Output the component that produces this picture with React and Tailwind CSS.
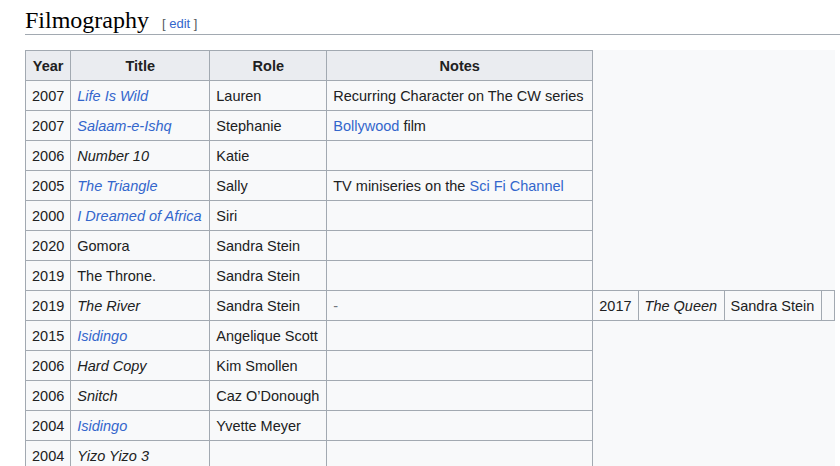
import React from "react";

const rows = [
  ["2007", "Life Is Wild", "link", "Lauren", [["Recurring Character on The CW series"]]],
  ["2007", "Salaam-e-Ishq", "link", "Stephanie", [["Bollywood", true], [" film"]]],
  ["2006", "Number 10", "it", "Katie", []],
  ["2005", "The Triangle", "link", "Sally", [["TV miniseries on the "], ["Sci Fi Channel", true]]],
  ["2000", "I Dreamed of Africa", "link", "Siri", []],
  ["2020", "Gomora", "plain", "Sandra Stein", []],
  ["2019", "The Throne.", "plain", "Sandra Stein", []],
  ["2019", "The River", "it", "Sandra Stein", "dash"],
  ["2015", "Isidingo", "link", "Angelique Scott", []],
  ["2006", "Hard Copy", "it", "Kim Smollen", []],
  ["2006", "Snitch", "it", "Caz O\u2019Donough", []],
  ["2004", "Isidingo", "link", "Yvette Meyer", []],
  ["2004", "Yizo Yizo 3", "it", "", []],
];

const td = "border border-[#a2a9b1] px-[6px] h-[30px] py-0 whitespace-nowrap";

export default function App() {
  return (
    <div className="w-[840px] h-[466px] overflow-hidden bg-white text-[#202122] font-['Liberation_Sans',Arial,sans-serif]">
      <div className="pl-[25px] pt-[5px]">
        <div className="flex items-baseline border-b border-[#a2a9b1] h-[30px]">
          <h2 className="font-['Liberation_Serif','Times_New_Roman',serif] text-[24px] leading-[30px] text-[#000]">
            Filmography
          </h2>
          <span className="ml-[13px] text-[13px] text-[#54595d]">
            [ <span className="text-[#3366cc]">edit</span> ]
          </span>
        </div>
        <table className="mt-[15px] border-collapse table-fixed bg-[#f8f9fa] text-[14.5px] leading-[20px]">
          <colgroup>
            <col className="w-[45px]" />
            <col className="w-[139px]" />
            <col className="w-[117px]" />
            <col className="w-[266px]" />
            <col className="w-[45px]" />
            <col className="w-[86px]" />
            <col className="w-[97px]" />
            <col className="w-[13px]" />
          </colgroup>
          <thead>
            <tr>
              {["Year", "Title", "Role", "Notes"].map((h) => (
                <th key={h} className={td + " bg-[#eaecf0] font-bold text-center"}>
                  {h}
                </th>
              ))}
            </tr>
          </thead>
          <tbody>
            {rows.map((r, i) => (
              <tr key={i}>
                <td className={td}>{r[0]}</td>
                <td className={td}>
                  {r[2] === "link" ? (
                    <span className="italic text-[#3366cc]">{r[1]}</span>
                  ) : r[2] === "it" ? (
                    <span className="italic">{r[1]}</span>
                  ) : (
                    r[1]
                  )}
                </td>
                <td className={td}>{r[3]}</td>
                <td className={td}>
                  {r[4] === "dash" ? (
                    <span className="text-[#72777d]">-</span>
                  ) : (
                    r[4].map((p, j) => (
                      <span key={j} className={p[1] ? "text-[#3366cc]" : ""}>
                        {p[0]}
                      </span>
                    ))
                  )}
                </td>
                {r[4] === "dash" && (
                  <>
                    <td className={td}>2017</td>
                    <td className={td}>
                      <span className="italic">The Queen</span>
                    </td>
                    <td className={td}>Sandra Stein</td>
                    <td className={td}></td>
                  </>
                )}
              </tr>
            ))}
          </tbody>
        </table>
      </div>
    </div>
  );
}
